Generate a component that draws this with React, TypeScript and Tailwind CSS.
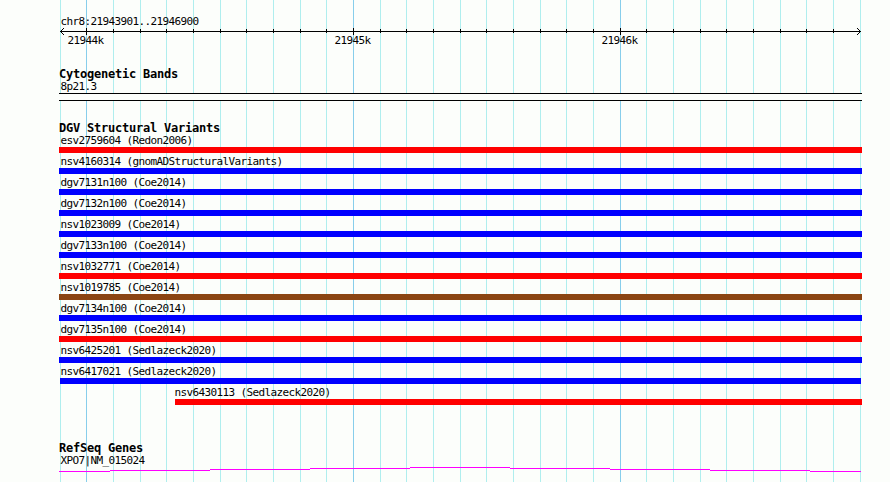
import { clsx } from "clsx";

interface Variant {
  id: string;
  study: string;
  color: string;
  span?: string;
  labelOffset?: string;
}

const GAIN = "bg-[#0000ff]";
const LOSS = "bg-[#ff0000]";
const GAIN_LOSS = "bg-[#8b4513]";

const variants: Variant[] = [
  { id: "esv2759604", study: "Redon2006", color: LOSS },
  { id: "nsv4160314", study: "gnomADStructuralVariants", color: GAIN },
  { id: "dgv7131n100", study: "Coe2014", color: GAIN },
  { id: "dgv7132n100", study: "Coe2014", color: GAIN },
  { id: "nsv1023009", study: "Coe2014", color: GAIN },
  { id: "dgv7133n100", study: "Coe2014", color: GAIN },
  { id: "nsv1032771", study: "Coe2014", color: LOSS },
  { id: "nsv1019785", study: "Coe2014", color: GAIN_LOSS },
  { id: "dgv7134n100", study: "Coe2014", color: GAIN },
  { id: "dgv7135n100", study: "Coe2014", color: LOSS },
  { id: "nsv6425201", study: "Sedlazeck2020", color: GAIN },
  { id: "nsv6417021", study: "Sedlazeck2020", color: GAIN, span: "ml-px mr-px", labelOffset: "-ml-px" },
  { id: "nsv6430113", study: "Sedlazeck2020", color: LOSS, span: "ml-[116px]", labelOffset: "-ml-[2px]" },
];

// one line every 100 bp, a major one every 1000 bp
const ticks = Array.from({ length: 31 }, (_, i) => ({
  x: Math.floor(60 + (i * 80) / 3),
  major: i % 10 === 1,
}));

function Grid() {
  return (
    <svg className="absolute inset-0" width="890" height="482" shapeRendering="crispEdges">
      {ticks.map((t) => (
        <rect key={t.x} x={t.x} y={0} width={1} height={482} fill={t.major ? "#87ceeb" : "#afeeee"} />
      ))}
    </svg>
  );
}

function Ruler() {
  return (
    <svg className="block h-[7px] w-[803px]" viewBox="59 28 803 7" shapeRendering="crispEdges">
      <rect x={60} y={31} width={801} height={1} />
      {ticks.slice(1, -1).map((t) => (
        <rect key={t.x} x={t.x} y={t.major ? 28 : 29} width={1} height={t.major ? 7 : 4} />
      ))}
      {[1, 2, 3].map((d) => (
        <g key={d}>
          <rect x={60 + d} y={31 - d} width={1} height={1} />
          <rect x={60 + d} y={31 + d} width={1} height={1} />
          <rect x={860 - d} y={31 - d} width={1} height={1} />
          <rect x={860 - d} y={31 + d} width={1} height={1} />
        </g>
      ))}
    </svg>
  );
}

function Label({ children, className }: { children: React.ReactNode; className?: string }) {
  return (
    <p className={clsx("h-3 text-[11px] leading-[14px] tracking-[-0.622px] whitespace-pre", className)}>
      {children}
    </p>
  );
}

function Title({ children }: { children: React.ReactNode }) {
  return <h2 className="h-3 text-[12px] leading-3 font-bold tracking-[-0.224px] whitespace-pre">{children}</h2>;
}

export default function App() {
  return (
    <div className="relative h-[482px] w-[890px] overflow-hidden bg-[#fcfefb] font-['DejaVu_Sans_Mono',monospace] text-black">
      <Grid />
      <main className="relative ml-[59px] w-[803px] pt-[15px]">
        <Label className="pl-[1.5px]">chr8:21943901..21946900</Label>
        <div className="pt-px">
          <Ruler />
        </div>
        <div className="-mt-px flex">
          <Label className="w-[267px] pl-[8.5px]">21944k</Label>
          <Label className="w-[267px] pl-[8.5px]">21945k</Label>
          <Label className="pl-[8.5px]">21946k</Label>
        </div>

        <section className="mt-[22px]">
          <Title>Cytogenetic Bands</Title>
          <Label className="pl-[1.5px]">8p21.3</Label>
          <div className="mt-px h-2 border-y border-black bg-[#fcfefb]" />
        </section>

        <section className="mt-[21px]">
          <Title>DGV Structural Variants</Title>
          {variants.map((v) => (
            <div key={v.id} className={clsx("h-[21px]", v.span)}>
              <Label className={clsx("pl-[1.5px]", v.labelOffset)}>{`${v.id} (${v.study})`}</Label>
              <div className={clsx("mt-px h-1.5", v.color)} />
            </div>
          ))}
        </section>

        <section className="mt-[35px]">
          <Title>RefSeq Genes</Title>
          <Label className="pl-[1.5px]">XPO7|NM_015024</Label>
          {/* shallow intron arc, stepped one pixel at a time */}
          <svg className="mt-px block h-[5px] w-[803px]" viewBox="59 467 803 5" shapeRendering="crispEdges" fill="#ff00ff">
            <rect x={59} y={471} width={51} height={1} />
            <rect x={110} y={470} width={100} height={1} />
            <rect x={210} y={469} width={100} height={1} />
            <rect x={310} y={468} width={100} height={1} />
            <rect x={410} y={467} width={100} height={1} />
            <rect x={510} y={468} width={100} height={1} />
            <rect x={610} y={469} width={100} height={1} />
            <rect x={710} y={470} width={100} height={1} />
            <rect x={810} y={471} width={51} height={1} />
          </svg>
        </section>
      </main>
    </div>
  );
}
